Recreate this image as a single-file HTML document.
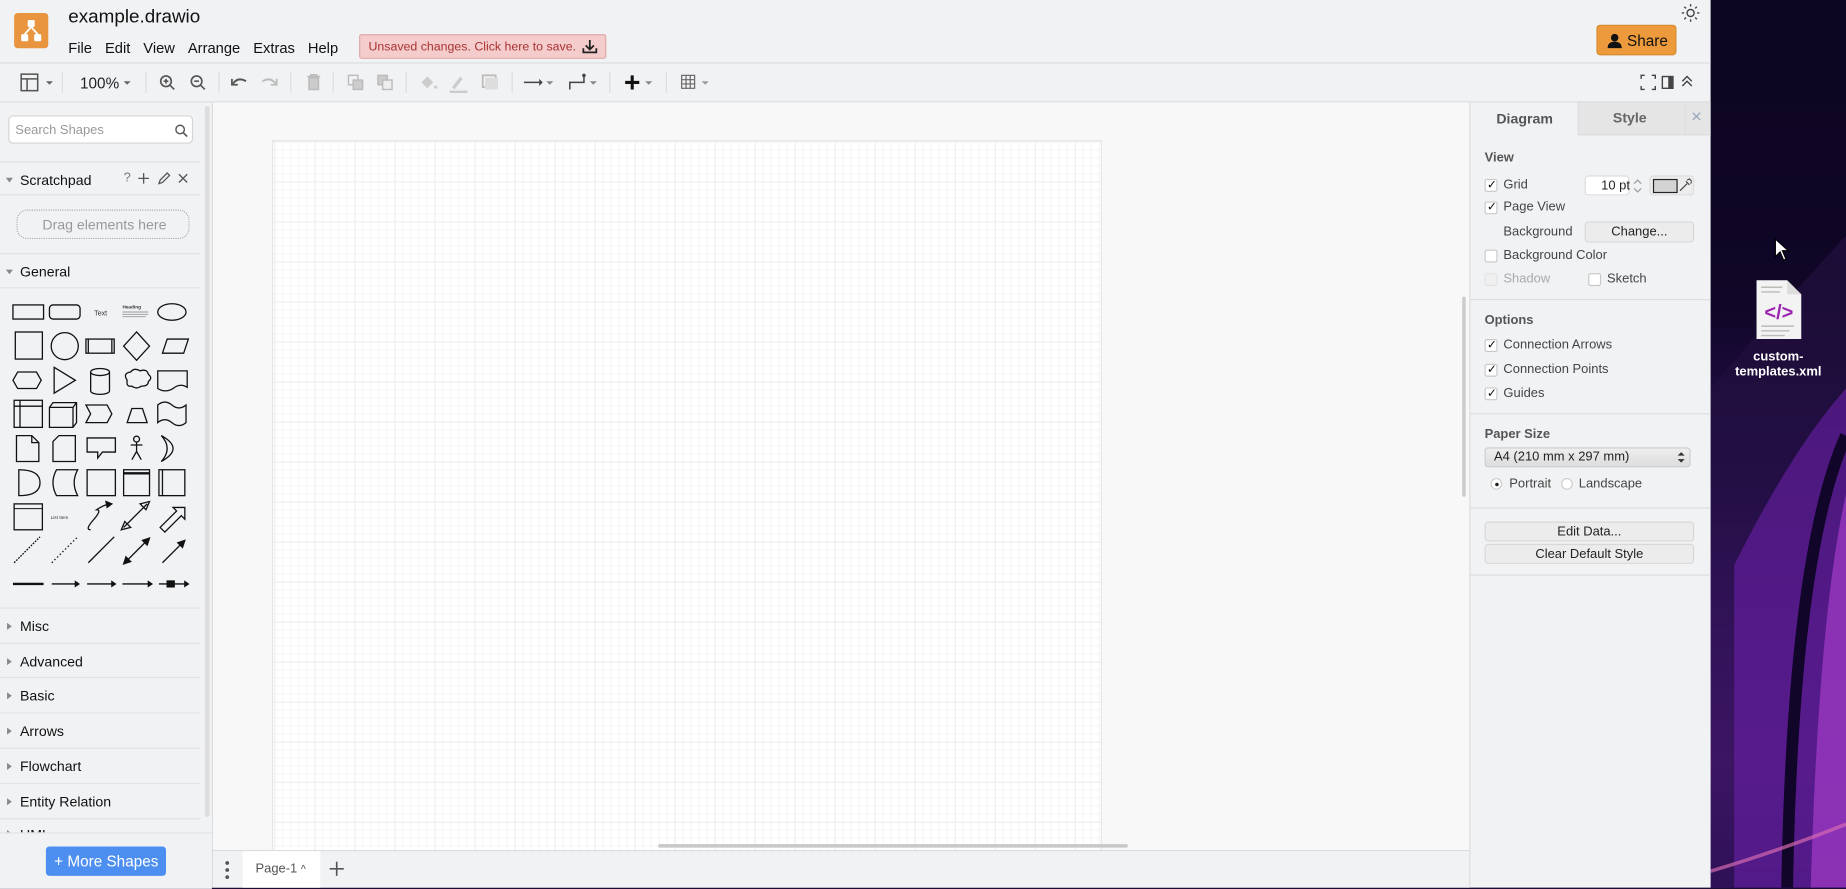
<!DOCTYPE html>
<html><head><meta charset="utf-8"><style>
html,body{margin:0;padding:0;width:1846px;height:888px;overflow:hidden;background:#1a0b33}
#w{position:absolute;left:0;top:0;width:1568px;height:754px;transform:scale(1.17730);transform-origin:0 0;font-family:"Liberation Sans",Helvetica,Arial,sans-serif;color:#000}
.a{position:absolute}
.t{position:absolute;white-space:nowrap}
.cb{position:absolute;width:9px;height:9px;border:1px solid #c8c8c8;border-radius:2px;background:#fff}
.ck{position:absolute;font-size:10px;line-height:11px;left:1px;top:-1px;color:#111}
.lbl{font-size:11px;color:#444}
.sec{position:absolute;left:0;width:170px;height:30px;border-top:1px solid #e2e3e6}
.sec span{position:absolute;left:17px;top:8px;font-size:12px;color:#111}
.sec i{position:absolute;left:6px;top:12px;width:0;height:0;border-top:3px solid transparent;border-bottom:3px solid transparent;border-left:4px solid #888}
.btn{position:absolute;border:1px solid #d8d8d8;border-radius:3px;background:#ececec;font-size:11px;text-align:center;color:#222}
</style></head><body><div id="w">
<!-- desktop -->
<div class="a" style="left:1453px;top:0;width:115px;height:754px;background:linear-gradient(180deg,#0c0520 0%,#100728 35%,#2a0e55 55%,#5a1a9a 72%,#7a24b8 86%,#4a1590 100%)"></div>
<svg class="a" style="left:1453px;top:0" width="115" height="754">
<path d="M0 330 Q60 260 115 200 L115 754 L0 754Z" fill="#22103f" opacity=".7"/>
<path d="M20 480 Q70 380 115 330 L115 754 L20 754Z" fill="#6a1fa8" opacity=".6"/>
<path d="M65 754 Q70 470 115 370" stroke="#12052a" stroke-width="10" fill="none"/>
<path d="M85 754 Q92 520 115 420 L115 754Z" fill="#a33cc8" opacity=".7"/>
<path d="M0 740 Q60 722 115 700" stroke="#d46ab0" stroke-width="3" fill="none" opacity=".7"/>
</svg>
<svg class="a" style="left:1506px;top:201px" width="16" height="22"><path d="M2 2 L2 17 L6 13 L9 20 L11 19 L8 12 L13 12Z" fill="#fff" stroke="#000" stroke-width="1"/></svg>
<svg class="a" style="left:1490px;top:237px" width="42" height="52"><path d="M2 1 H28 L40 13 V51 H2Z" fill="#f3f3f3"/><path d="M28 1 V13 H40" fill="#ddd"/><g stroke="#bbb" stroke-width="1.2"><path d="M6 7h18M6 11h16M6 40h28M6 44h24M6 48h20"/></g><text x="21" y="34" font-size="17" font-weight="bold" fill="#9c27b0" text-anchor="middle" font-family="Liberation Sans">&lt;/&gt;</text></svg>
<div class="t" style="left:1462px;top:297px;width:97px;text-align:center;color:#fff;font-size:11px;font-weight:bold;line-height:13px;white-space:normal">custom-<br>templates.xml</div>

<!-- app -->
<div class="a" style="left:0;top:0;width:1453px;height:754px;background:#f1f2f4;border-radius:0 0 0 8px"></div>
<!-- header -->
<div class="a" style="left:12px;top:11px;width:29px;height:30px;background:#e9953f;border-radius:3px"></div>
<svg class="a" style="left:12px;top:11px" width="29" height="30"><g fill="#fff"><rect x="11.5" y="6" width="6" height="6" rx="1"/><rect x="6" y="18" width="6" height="6" rx="1"/><rect x="17" y="18" width="6" height="6" rx="1"/></g><path d="M14.5 12 L9 18 M14.5 12 L20 18" stroke="#fff" stroke-width="1.5"/></svg>
<div class="t" style="left:58px;top:6px;font-size:16px;color:#111">example.drawio</div>
<div class="t" style="left:58px;top:34px;font-size:12.5px;color:#111"><span>File</span><span style="margin-left:11px">Edit</span><span style="margin-left:11px">View</span><span style="margin-left:11px">Arrange</span><span style="margin-left:11px">Extras</span><span style="margin-left:11px">Help</span></div>
<div class="a" style="left:305px;top:29px;width:210px;height:21px;background:#f4cccc;border:1px solid #e0a8a8;border-radius:2px;box-sizing:border-box"></div>
<div class="t" style="left:313px;top:34px;font-size:10.5px;color:#a33">Unsaved changes. Click here to save.</div>
<svg class="a" style="left:494px;top:33px" width="14" height="13"><path d="M7 1v8M3.5 5.5L7 9l3.5-3.5M1.5 8v3.5h11V8" stroke="#222" stroke-width="1.5" fill="none"/></svg>
<svg class="a" style="left:1428px;top:3px" width="16" height="16"><circle cx="8" cy="8" r="3" fill="none" stroke="#444" stroke-width="1.2"/><g stroke="#444" stroke-width="1.2"><path d="M8 0.5v2M8 13.5v2M0.5 8h2M13.5 8h2M2.7 2.7l1.4 1.4M11.9 11.9l1.4 1.4M2.7 13.3l1.4-1.4M11.9 4.1l1.4-1.4"/></g></svg>
<div class="a" style="left:1356px;top:21px;width:68px;height:26px;background:#ec9a3c;border-radius:3px;border:1px solid #d88a30;box-sizing:border-box"></div>
<svg class="a" style="left:1365px;top:28px" width="13" height="13"><circle cx="6.5" cy="4" r="3.2" fill="#111"/><path d="M0.5 13 Q0.5 7.5 6.5 7.5 Q12.5 7.5 12.5 13Z" fill="#111"/></svg>
<div class="t" style="left:1382px;top:27px;font-size:13px;color:#111">Share</div>
<div class="a" style="left:0;top:53px;width:1453px;height:1px;background:#dcdde0"></div>
<!-- toolbar -->
<svg class="a" style="left:0;top:54px" width="620" height="32" font-family="Liberation Sans">
<g stroke="#555" fill="none" stroke-width="1.3">
<rect x="18" y="9" width="14" height="14"/><path d="M18 13h14M23 13v10"/>
</g>
<path d="M39 15l3 3 3-3z" fill="#666"/>
<line x1="53" y1="7" x2="53" y2="25" stroke="#ddd"/>
<text x="68" y="21" font-size="13" fill="#222">100%</text>
<path d="M105 15l3 3 3-3z" fill="#666"/>
<line x1="124" y1="7" x2="124" y2="25" stroke="#ddd"/>
<g stroke="#555" fill="none" stroke-width="1.4"><circle cx="141" cy="15" r="4.5"/><path d="M144.5 18.5l3.5 3.5M139 15h4M141 13v4"/><circle cx="167" cy="15" r="4.5"/><path d="M170.5 18.5l3.5 3.5M165 15h4"/></g>
<line x1="186" y1="7" x2="186" y2="25" stroke="#ddd"/>
<path d="M198 17 q4 -6 11 -2" stroke="#555" stroke-width="1.6" fill="none"/><path d="M197 13v5h5" stroke="#555" stroke-width="1.5" fill="none"/>
<path d="M234 17 q-4 -6 -11 -2" stroke="#bbb" stroke-width="1.6" fill="none"/><path d="M235 13v5h-5" stroke="#bbb" stroke-width="1.5" fill="none"/>
<line x1="247" y1="7" x2="247" y2="25" stroke="#ddd"/>
<path d="M261 11h11M264 11v-1.5h5V11M262.5 12h8v10h-8z" stroke="#bbb" stroke-width="1.3" fill="#ccc"/>
<line x1="283" y1="7" x2="283" y2="25" stroke="#ddd"/>
<g stroke="#bbb" fill="none" stroke-width="1.2"><rect x="296" y="10" width="8" height="8"/><rect x="300" y="14" width="8" height="8" fill="#ccc"/><rect x="321" y="10" width="8" height="8" fill="#ccc"/><rect x="325" y="14" width="8" height="8" fill="#eee"/></g>
<line x1="345" y1="7" x2="345" y2="25" stroke="#ddd"/>
<path d="M358 16l5-5 5 5-5 5z" fill="#ccc"/><circle cx="370" cy="20" r="1.4" fill="#ccc"/>
<path d="M384 20l7-9 2 2-7 9z" fill="#ccc"/><rect x="382" y="23" width="15" height="2" fill="#ccc"/>
<rect x="410" y="10" width="11" height="10" fill="none" stroke="#bbb" stroke-width="1.5"/><rect x="412" y="12" width="11" height="10" fill="#ddd"/>
<line x1="435" y1="7" x2="435" y2="25" stroke="#ddd"/>
<path d="M445 16h14" stroke="#444" stroke-width="1.3"/><path d="M458 13l3 3-3 3z" fill="#444"/><path d="M464 15l3 3 3-3z" fill="#888"/>
<path d="M484 22v-6h12v-6" stroke="#444" stroke-width="1.3" fill="none"/><circle cx="496" cy="10" r="1.5" fill="#444"/><path d="M501 15l3 3 3-3z" fill="#888"/>
<line x1="518" y1="7" x2="518" y2="25" stroke="#ddd"/>
<path d="M537 10v12M531 16h12" stroke="#111" stroke-width="2.6"/><path d="M548 15l3 3 3-3z" fill="#888"/>
<line x1="566" y1="7" x2="566" y2="25" stroke="#ddd"/>
<g stroke="#666" stroke-width="1" fill="none"><rect x="579" y="10" width="11" height="11"/><path d="M582.7 10v11M586.3 10v11M579 13.7h11M579 17.3h11"/></g><path d="M596 15l3 3 3-3z" fill="#999"/>
</svg>
<svg class="a" style="left:1390px;top:60px" width="55" height="20"><g stroke="#444" stroke-width="1.2" fill="none"><path d="M4 7V4h3M13 4h3v3M16 13v3h-3M7 16H4v-3"/><rect x="22" y="5" width="9" height="10"/><path d="M39 9l4-4 4 4M39 13l4-4 4 4"/></g><rect x="27" y="5" width="4" height="10" fill="#444"/></svg>
<div class="a" style="left:0;top:86px;width:1453px;height:1px;background:#dcdde0"></div>

<!-- left sidebar -->
<div class="a" style="left:7px;top:98px;width:157px;height:24px;background:#fff;border:1px solid #d5d5d5;border-radius:4px;box-sizing:border-box"></div>
<div class="t" style="left:13px;top:105px;font-size:11px;color:#999">Search Shapes</div>
<svg class="a" style="left:148px;top:105px" width="12" height="12"><circle cx="5" cy="5" r="3.6" stroke="#555" stroke-width="1.2" fill="none"/><path d="M7.7 7.7l3.3 3.3" stroke="#555" stroke-width="1.4"/></svg>
<div class="sec" style="top:137px;height:28px"><i style="border-left:3px solid transparent;border-right:3px solid transparent;border-top:4px solid #888;border-bottom:0;left:5px;top:13px"></i><span style="top:8px">Scratchpad</span></div>
<div class="t" style="left:105px;top:145px;font-size:11px;color:#777">?</div>
<svg class="a" style="left:116px;top:145px" width="50" height="13"><g stroke="#555" stroke-width="1.1" fill="none"><path d="M6 2v9M1.5 6.5h9"/><path d="M19 11l1-3 6-6 2 2-6 6z"/><path d="M36 3l7 7M43 3l-7 7"/></g></svg>
<div class="a" style="left:0;top:165px;width:170px;height:1px;background:#e2e3e6"></div>
<div class="a" style="left:14px;top:178px;width:147px;height:25px;border:1.5px dotted #aaa;border-radius:9px;box-sizing:border-box"></div>
<div class="t" style="left:36px;top:184px;font-size:12px;color:#999">Drag elements here</div>
<div class="sec" style="top:215px"><i style="border-left:3px solid transparent;border-right:3px solid transparent;border-top:4px solid #888;border-bottom:0;left:5px;top:13px"></i><span>General</span></div>
<div class="a" style="left:0;top:244px;width:170px;height:1px;background:#e2e3e6"></div>
<svg class="a" style="left:0;top:248px" width="170" height="262" fill="none" stroke="#111" stroke-width="1.1" font-family="Liberation Sans">
<rect x="11" y="11" width="26" height="12"/><rect x="42" y="11" width="26" height="12" rx="3"/>
<text x="80" y="20" font-size="6" fill="#333" stroke="none">Text</text>
<text x="104" y="14" font-size="4" fill="#333" stroke="none" font-weight="bold">Heading</text><path d="M104 17h22M104 19h22M104 21h20" stroke="#999" stroke-width=".8"/>
<ellipse cx="146" cy="17" rx="12" ry="7"/>
<rect x="13" y="34" width="23" height="23"/><circle cx="55" cy="46" r="11.5"/><rect x="73" y="40" width="24" height="12"/><path d="M75 40v12M95 40v12"/><path d="M116 34l11 12-11 12-11-12z"/><path d="M138 52l4-12h18l-4 12z"/>
<path d="M11 75l4-7h16l4 7-4 7H15z"/><path d="M46 64l18 11-18 11z"/><path d="M77 68v16a8 3 0 0 0 16 0V68a8 3 0 0 0-16 0a8 3 0 0 0 16 0"/><path d="M108 75q-4-6 3-7q3-4 8-1q6-2 7 3q4 3 0 6q0 4-6 4q-4 3-8 0q-5 1-4-5z"/><path d="M134 67h25v14q-6-4-12 1q-7 4-13 0z"/>
<rect x="12" y="92" width="24" height="23"/><path d="M12 97h24M17 92v23"/><path d="M42 98l3-4h20v17l-3 4H42z M42 98h20v17 M62 98l3-4"/><path d="M73 96h18l4 7.5-4 7.5H73l4-7.5z"/><path d="M108 111l4-12h9l4 12z"/><path d="M134 96q6-5 12 0q6 5 12 0v15q-6 5-12 0q-6-5-12 0z"/>
<path d="M14 122h13l6 6v16H14z M27 122v6h6"/><path d="M50 122h14v22H45v-17z"/><path d="M74 124h24v12H87l-4 5v-5h-9z"/><circle cx="116" cy="125" r="2.5"/><path d="M116 127.5v8M111 130h10M116 135.5l-4 7M116 135.5l4 7"/><path d="M137 122q20 11 0 22q10-11 0-22z"/>
<path d="M16 151q18 0 18 11t-18 11z"/><path d="M48 151h18q-6 11 0 22H48q-6-11 0-22z"/><rect x="74" y="151" width="24" height="22"/><rect x="105" y="151" width="22" height="22"/><path d="M105 154h22" stroke-width="2"/><rect x="135" y="151" width="22" height="22"/><path d="M138 151v22"/>
<rect x="12" y="180" width="24" height="22"/><path d="M12 184h24" stroke-width=".8"/><text x="43" y="193" font-size="4" fill="#333" stroke="none">List Item</text><path d="M77 202q-5 0 2-8q8-9 3-9q6-4 11-5"/><path d="M90 178l5 2-4 3z" fill="#111"/><path d="M105 200l20-20M103 202l3-7 5 5zM127 178l-3 7-5-5z"/><path d="M136 200l14-14-3-3h10v10l-3-3-14 14z"/>
<path d="M12 230l22-22" stroke-dasharray="1.5 1"/><path d="M44 230l22-22" stroke-dasharray="1.2 2"/><path d="M75 230l22-22"/><path d="M107 229l18-18"/><path d="M105 231l2-6 4 4zM127 209l-2 6-4-4z" fill="#111"/><path d="M138 230l16-16"/><path d="M157 211l-2 6-4-4z" fill="#111"/>
<path d="M11 248h26" stroke-width="2"/><path d="M44 248h20"/><path d="M64 246l3 2-3 2z" fill="#111"/><path d="M74 248h22"/><path d="M95 246l3 2-3 2z" fill="#111"/><path d="M104 248h22"/><path d="M126 246l3 2-3 2z" fill="#111"/><path d="M135 248h22"/><rect x="142" y="245.5" width="6" height="5" fill="#111"/><path d="M157 246l3 2-3 2z" fill="#111"/>
</svg>
<div class="sec" style="top:516px"><i></i><span>Misc</span></div>
<div class="sec" style="top:546px"><i></i><span>Advanced</span></div>
<div class="sec" style="top:575px"><i></i><span>Basic</span></div>
<div class="sec" style="top:605px"><i></i><span>Arrows</span></div>
<div class="sec" style="top:635px"><i></i><span>Flowchart</span></div>
<div class="sec" style="top:665px"><i></i><span>Entity Relation</span></div>
<div class="sec" style="top:695px;height:12px;overflow:hidden"><i style="top:9px"></i><span style="top:6px">UML</span></div>
<div class="a" style="left:0;top:707px;width:180px;height:47px;background:#f1f2f4;border-top:1px solid #e2e3e6"></div>
<div class="a" style="left:174px;top:90px;width:4px;height:604px;background:#ddd;border-radius:2px"></div>
<div class="a" style="left:39px;top:719px;width:102px;height:25px;background:#4d8ff0;border-radius:3px"></div>
<div class="t" style="left:46px;top:724px;font-size:13px;color:#fff">+ More Shapes</div>
<div class="a" style="left:180px;top:87px;width:1px;height:667px;background:#dcdde0"></div>

<!-- canvas -->
<div class="a" style="left:181px;top:87px;width:1067px;height:635px;background:#f8f8f9"></div>
<div class="a" style="left:231px;top:119px;width:705px;height:603px;background-color:#fff;border:1px solid #e8e2e2;border-bottom:0;box-sizing:border-box;background-image:linear-gradient(90deg,#efefef 1px,transparent 1px),linear-gradient(0deg,#efefef 1px,transparent 1px),linear-gradient(90deg,#f7f7f7 1px,transparent 1px),linear-gradient(0deg,#f7f7f7 1px,transparent 1px);background-size:34px 34px,34px 34px,6.8px 6.8px,6.8px 6.8px;background-position:1px 0,0 1px,1px 0,0 1px"></div>
<div class="a" style="left:559px;top:717px;width:399px;height:3px;background:#c8c8c8;border-radius:2px"></div>
<div class="a" style="left:1242px;top:252px;width:3px;height:170px;background:#ccc;border-radius:2px"></div>
<!-- bottom -->
<div class="a" style="left:181px;top:722px;width:1067px;height:32px;background:#f1f2f4;border-top:1px solid #dcdde0;box-sizing:border-box"></div>
<svg class="a" style="left:188px;top:730px" width="10" height="18"><circle cx="5" cy="3" r="1.6" fill="#555"/><circle cx="5" cy="9" r="1.6" fill="#555"/><circle cx="5" cy="15" r="1.6" fill="#555"/></svg>
<div class="a" style="left:206px;top:723px;width:66px;height:31px;background:#fff"></div>
<div class="t" style="left:217px;top:732px;font-size:11px;color:#555">Page-1 <span style="font-size:9px">^</span></div>
<svg class="a" style="left:278px;top:730px" width="16" height="16"><path d="M8 2v12M2 8h12" stroke="#555" stroke-width="1.4"/></svg>

<!-- right panel -->
<div class="a" style="left:1248px;top:87px;width:1px;height:667px;background:#dcdde0"></div>
<div class="a" style="left:1340px;top:87px;width:113px;height:28px;background:#e5e5e6;border-bottom:1px solid #dcdde0;box-sizing:border-box"></div>
<div class="a" style="left:1340px;top:87px;width:1px;height:28px;background:#dcdde0"></div>
<div class="a" style="left:1431px;top:87px;width:1px;height:28px;background:#dcdde0"></div>
<div class="t" style="left:1271px;top:94px;font-size:12px;font-weight:bold;color:#555">Diagram</div>
<div class="t" style="left:1370px;top:93px;font-size:12px;font-weight:bold;color:#666">Style</div>
<div class="t" style="left:1436px;top:92px;font-size:12px;color:#9ab">✕</div>
<div class="t" style="left:1261px;top:128px;font-size:11px;font-weight:bold;color:#555">View</div>
<div class="cb" style="left:1261px;top:152px"><span class="ck">✓</span></div><div class="t lbl" style="left:1277px;top:151px">Grid</div>
<div class="a" style="left:1346px;top:149px;width:38px;height:17px;background:#fff;border:1px solid #ddd;border-radius:3px;box-sizing:border-box"></div>
<div class="t" style="left:1360px;top:152px;font-size:11px;color:#222">10 pt</div>
<svg class="a" style="left:1386px;top:150px" width="10" height="16"><path d="M2 6l3-3 3 3M2 10l3 3 3-3" stroke="#999" fill="none"/></svg>
<div class="a" style="left:1401px;top:149px;width:38px;height:17px;background:#ececec;border:1px solid #ddd;border-radius:3px;box-sizing:border-box"></div>
<div class="a" style="left:1404px;top:152px;width:19px;height:10px;background:#d4d4d4;border:1px solid #222"></div>
<svg class="a" style="left:1425px;top:151px" width="12" height="13"><path d="M2 11l6-6M7 3l3 3M8 2l2-1 2 2-1 2" stroke="#444" fill="none"/></svg>
<div class="cb" style="left:1261px;top:171px"><span class="ck">✓</span></div><div class="t lbl" style="left:1277px;top:170px">Page View</div>
<div class="t lbl" style="left:1277px;top:191px">Background</div>
<div class="btn" style="left:1346px;top:188px;width:93px;height:18px;line-height:17px;box-sizing:border-box">Change...</div>
<div class="cb" style="left:1261px;top:212px"></div><div class="t lbl" style="left:1277px;top:211px">Background Color</div>
<div class="cb" style="left:1261px;top:232px;border-color:#e3e3e3;background:#f0f0f0"></div><div class="t lbl" style="left:1277px;top:231px;color:#aaa">Shadow</div>
<div class="cb" style="left:1349px;top:232px"></div><div class="t lbl" style="left:1365px;top:231px">Sketch</div>
<div class="a" style="left:1249px;top:254px;width:204px;height:1px;background:#dcdde0"></div>
<div class="t" style="left:1261px;top:266px;font-size:11px;font-weight:bold;color:#555">Options</div>
<div class="cb" style="left:1261px;top:288px"><span class="ck">✓</span></div><div class="t lbl" style="left:1277px;top:287px">Connection Arrows</div>
<div class="cb" style="left:1261px;top:309px"><span class="ck">✓</span></div><div class="t lbl" style="left:1277px;top:308px">Connection Points</div>
<div class="cb" style="left:1261px;top:329px"><span class="ck">✓</span></div><div class="t lbl" style="left:1277px;top:328px">Guides</div>
<div class="a" style="left:1249px;top:351px;width:204px;height:1px;background:#dcdde0"></div>
<div class="t" style="left:1261px;top:363px;font-size:11px;font-weight:bold;color:#555">Paper Size</div>
<div class="a" style="left:1261px;top:380px;width:175px;height:17px;background:linear-gradient(#eee,#ddd);border:1px solid #ccc;border-radius:3px;box-sizing:border-box"></div>
<div class="t" style="left:1269px;top:382px;font-size:11px;color:#222">A4 (210 mm x 297 mm)</div>
<svg class="a" style="left:1424px;top:383px" width="8" height="11"><path d="M1 4l3-3 3 3zM1 7l3 3 3-3z" fill="#333"/></svg>
<div class="a" style="left:1266px;top:406px;width:10px;height:10px;border:1px solid #ccc;border-radius:50%;background:#fff;box-sizing:border-box"></div><div class="a" style="left:1269.5px;top:409.5px;width:3px;height:3px;border-radius:50%;background:#222"></div>
<div class="t lbl" style="left:1282px;top:405px">Portrait</div>
<div class="a" style="left:1326px;top:406px;width:10px;height:10px;border:1px solid #ccc;border-radius:50%;background:#fff;box-sizing:border-box"></div>
<div class="t lbl" style="left:1341px;top:405px">Landscape</div>
<div class="a" style="left:1249px;top:431px;width:204px;height:1px;background:#dcdde0"></div>
<div class="btn" style="left:1261px;top:443px;width:178px;height:17px;line-height:16px;box-sizing:border-box">Edit Data...</div>
<div class="btn" style="left:1261px;top:462px;width:178px;height:17px;line-height:16px;box-sizing:border-box">Clear Default Style</div>
<div class="a" style="left:1249px;top:488px;width:204px;height:1px;background:#dcdde0"></div>
</div></body></html>
